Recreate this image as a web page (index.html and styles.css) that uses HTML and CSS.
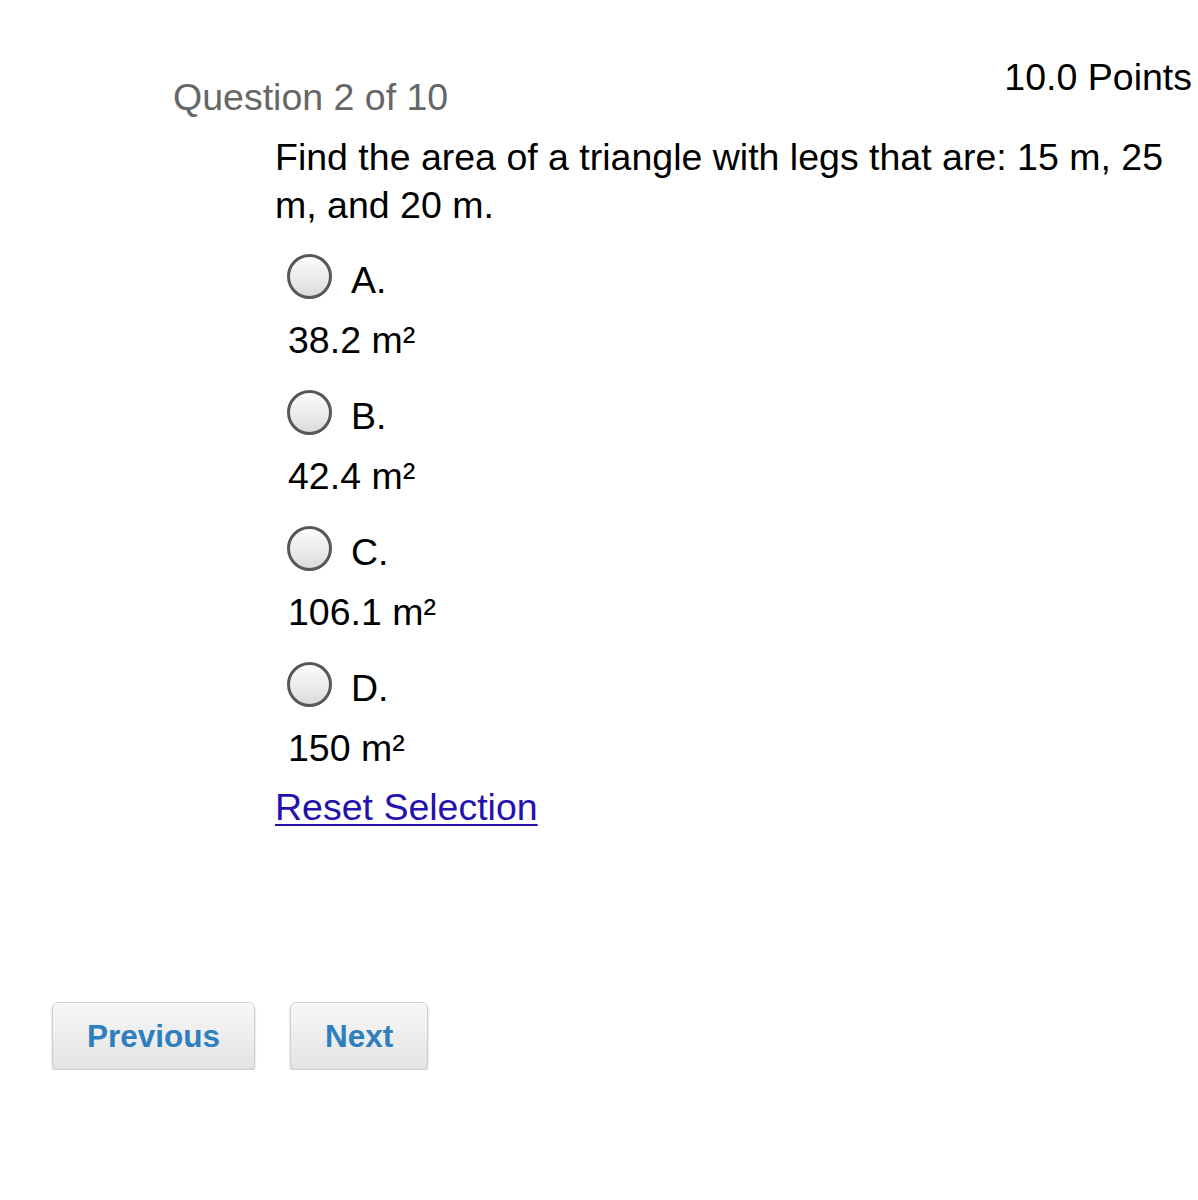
FILE: index.html
```html
<!DOCTYPE html>
<html lang="en">
<head>
<meta charset="utf-8">
<title>Question 2 of 10</title>
<link rel="stylesheet" href="styles.css">
</head>
<body>
<div class="page">
  <div class="header">
    <div class="qnum">Question 2 of 10</div>
    <div class="points">10.0 Points</div>
  </div>
  <div class="question">Find the area of a triangle with legs that are: 15 m, 25 m, and 20 m.</div>
  <div class="options">
    <div class="option">
      <div class="opt-row"><span class="radio"></span><span class="letter">A.</span></div>
      <div class="value">38.2 m²</div>
    </div>
    <div class="option">
      <div class="opt-row"><span class="radio"></span><span class="letter">B.</span></div>
      <div class="value">42.4 m²</div>
    </div>
    <div class="option">
      <div class="opt-row"><span class="radio"></span><span class="letter">C.</span></div>
      <div class="value">106.1 m²</div>
    </div>
    <div class="option">
      <div class="opt-row"><span class="radio"></span><span class="letter">D.</span></div>
      <div class="value">150 m²</div>
    </div>
  </div>
  <div class="reset"><a href="#" class="reset-link">Reset Selection</a></div>
  <div class="nav">
    <button class="btn" type="button">Previous</button>
    <button class="btn" type="button">Next</button>
  </div>
</div>
</body>
</html>
```

FILE: styles.css
```css
html, body {
  margin: 0;
  padding: 0;
  background: #ffffff;
}

body {
  font-family: "Liberation Sans", Arial, Helvetica, sans-serif;
  font-size: 37.5px;
  line-height: 48px;
  color: #000000;
}

.page {
  width: 1198px;
  padding-top: 53px;
}

.header {
  display: flex;
  justify-content: space-between;
  align-items: flex-start;
}

.qnum {
  margin-left: 173px;
  margin-top: 20px;
  color: #666666;
}

.points {
  margin-right: 6px;
  color: #000000;
}

.question {
  margin-top: 12px;
  margin-left: 275px;
  width: 910px;
}

.options {
  margin-top: 24px;
  margin-left: 287px;
  display: flex;
  flex-direction: column;
  gap: 25px;
}

.opt-row {
  display: flex;
  align-items: center;
  height: 48px;
}

.radio {
  width: 39px;
  height: 39px;
  border: 3px solid #585858;
  border-radius: 50%;
  background: linear-gradient(#fbfbfb, #dcdcdc);
  flex: none;
  margin-top: -2px;
}

.letter {
  margin-left: 19px;
  padding-top: 6px;
}

.value {
  margin-top: 15px;
  margin-left: 1px;
}

.reset {
  margin-top: 11px;
  margin-left: 275px;
}

.reset-link {
  color: #2412b0;
  text-decoration: underline;
  text-decoration-thickness: 2px;
  text-underline-offset: 4px;
}

.nav {
  margin-top: 171px;
  margin-left: 52px;
  display: flex;
  gap: 35px;
}

.btn {
  font-family: "Liberation Sans", Arial, Helvetica, sans-serif;
  font-weight: bold;
  font-size: 31.5px;
  color: #2e7fbd;
  height: 68px;
  padding: 0 34px;
  border: 1px solid #cfcfcf;
  border-radius: 6px;
  background: linear-gradient(#f7f7f7, #e4e4e4);
  box-shadow: 0 2px 2px rgba(0, 0, 0, 0.28), inset 0 1px 0 #ffffff;
  cursor: pointer;
}
```
